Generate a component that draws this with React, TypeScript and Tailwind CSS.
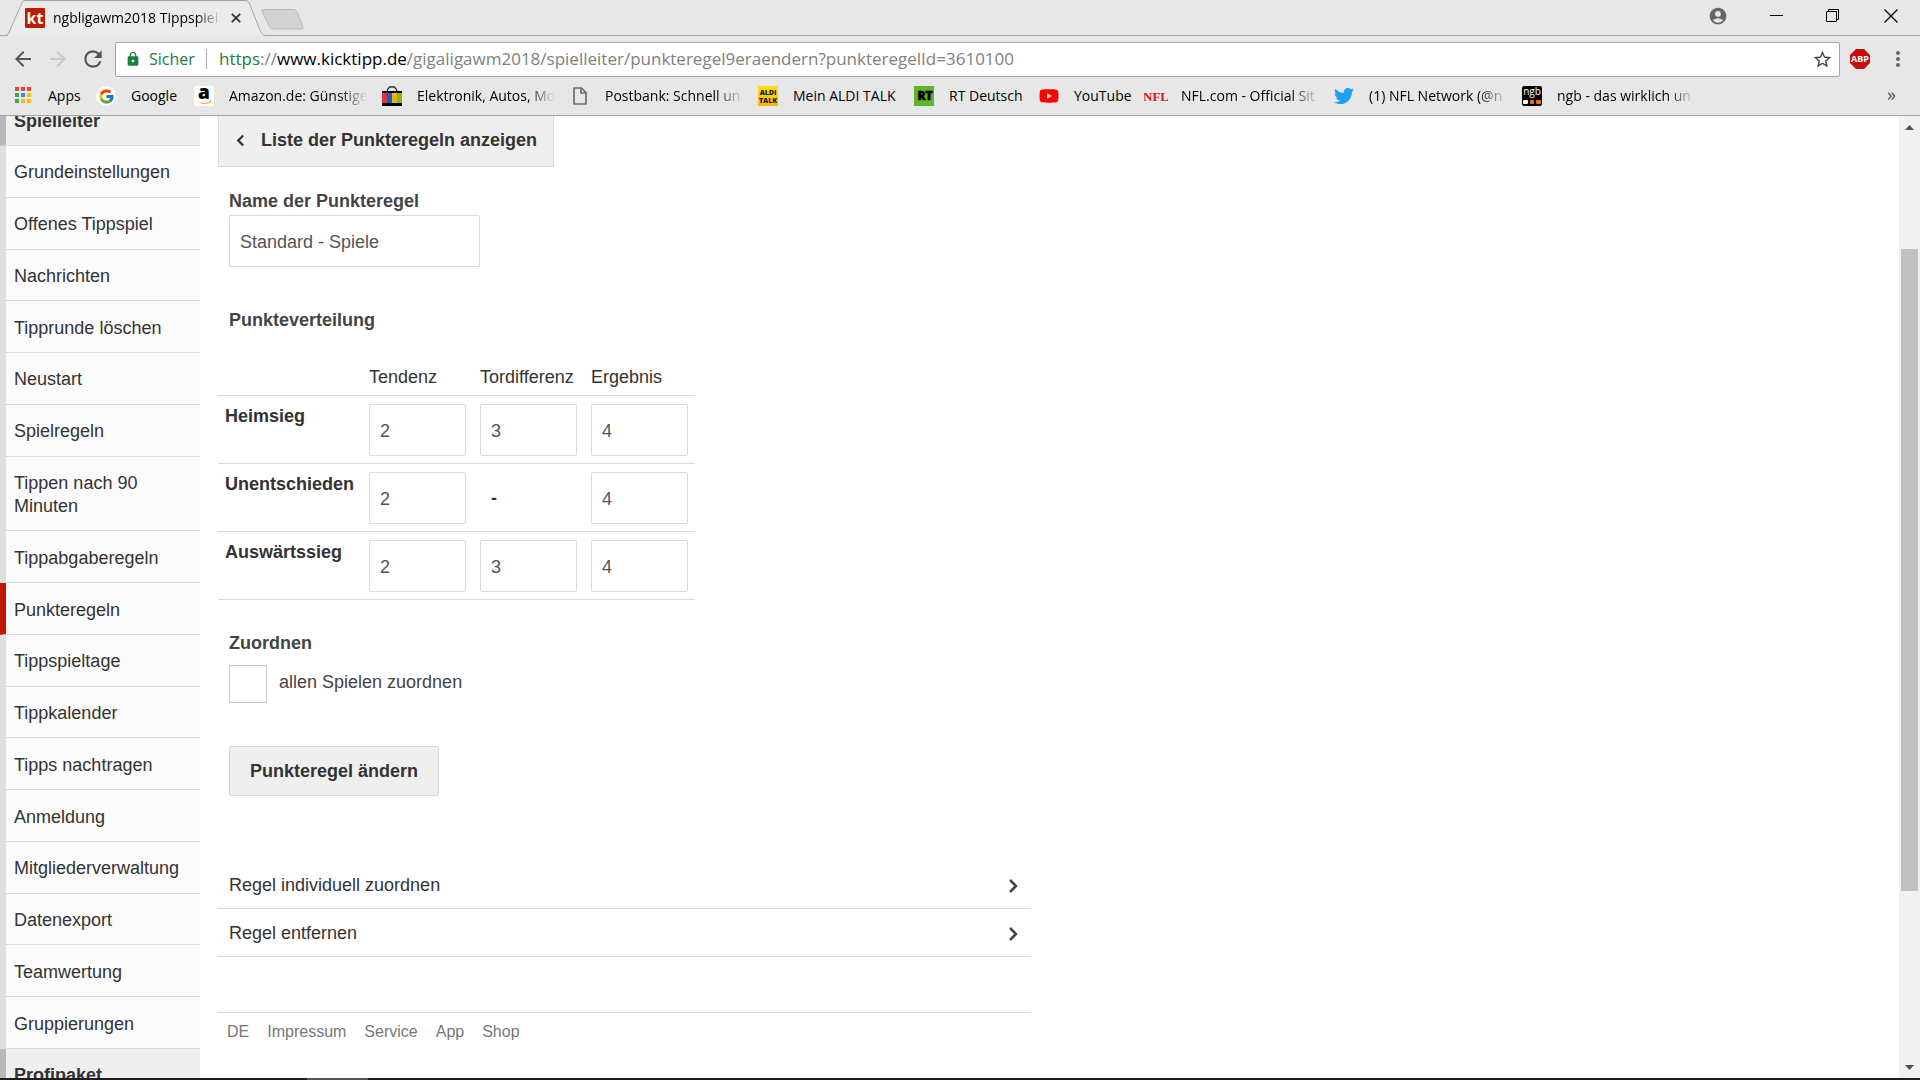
import { ReactNode } from 'react'
import { FaTwitter, FaYoutube } from 'react-icons/fa'
import { FcGoogle } from 'react-icons/fc'
import {
  MdAccountCircle,
  MdArrowBack,
  MdArrowForward,
  MdLock,
  MdMoreVert,
  MdRefresh,
  MdStarBorder,
} from 'react-icons/md'

const menuItems = [
  'Grundeinstellungen',
  'Offenes Tippspiel',
  'Nachrichten',
  'Tipprunde löschen',
  'Neustart',
  'Spielregeln',
  'Tippen nach 90 Minuten',
  'Tippabgaberegeln',
  'Punkteregeln',
  'Tippspieltage',
  'Tippkalender',
  'Tipps nachtragen',
  'Anmeldung',
  'Mitgliederverwaltung',
  'Datenexport',
  'Teamwertung',
  'Gruppierungen',
]

const columns = ['Tendenz', 'Tordifferenz', 'Ergebnis']

const rules = [
  { name: 'Heimsieg', points: ['2', '3', '4'] },
  { name: 'Unentschieden', points: ['2', null, '4'] },
  { name: 'Auswärtssieg', points: ['2', '3', '4'] },
]

function AppsIcon() {
  const colors = ['#f44336', '#f44336', '#f44336', '#34a853', '#4285f4', '#fbbc05', '#34a853', '#fbbc05', '#fbbc05']
  return (
    <svg className="w-5 h-5" viewBox="0 0 20 20">
      {colors.map((color, i) => (
        <rect key={i} x={2 + (i % 3) * 6} y={1 + Math.floor(i / 3) * 6} width="4" height="4" fill={color} />
      ))}
    </svg>
  )
}

function GoogleIcon() {
  return (
    <span className="flex w-5 h-5 items-center justify-center rounded-full bg-white">
      <FcGoogle size={17} />
    </span>
  )
}

function AmazonIcon() {
  return (
    <svg className="w-5 h-5" viewBox="0 0 20 20">
      <rect width="20" height="20" rx="3" fill="#fff" />
      <text x="10" y="13" textAnchor="middle" fontFamily="Open Sans" fontWeight="800" fontSize="19">a</text>
      <path d="M2.5 14.5c4.500 3.500 10 3.300 13.500 1l-.6-.7 2.300-.2-.6 2.300-.5-.6c-4.200 2.700-10.400 2-14.100-1.800z" fill="#f90" />
    </svg>
  )
}

function BagIcon() {
  return (
    <svg className="w-5 h-5" viewBox="0 0 20 20">
      <path d="M5.500 6V3.500L7.500 1h5l2 2.500V6" fill="none" stroke="#333" strokeWidth="1.300" />
      <rect y="5" width="20" height="2" fill="#000" />
      <rect y="7" width="5" height="10" fill="#e53238" />
      <rect x="5" y="7" width="5" height="10" fill="#0064d2" />
      <rect x="10" y="7" width="5" height="10" fill="#f5af02" />
      <rect x="15" y="7" width="5" height="10" fill="#86b817" />
      <rect y="17" width="20" height="3" fill="#000" />
    </svg>
  )
}

function PageIcon() {
  return (
    <svg className="w-5 h-5" viewBox="0 0 20 20" fill="none" stroke="#6e6e6e" strokeWidth="1.700">
      <path d="M4 2h7.500L16 6.500V18H4z" />
      <path d="M11 2v5h5" />
    </svg>
  )
}

function AldiIcon() {
  return (
    <svg className="w-5 h-5" viewBox="0 0 20 20" fontFamily="Open Sans" fontWeight="800" fontSize="7" textAnchor="middle" fill="#0b2140">
      <defs>
        <linearGradient id="aldi" x1="0" y1="0" x2="0" y2="1">
          <stop offset="0" stopColor="#ffe000" />
          <stop offset="1" stopColor="#ffb400" />
        </linearGradient>
      </defs>
      <rect width="20" height="20" fill="url(#aldi)" />
      <text x="10" y="9">ALDI</text>
      <text x="10" y="17">TALK</text>
    </svg>
  )
}

function RtIcon() {
  return (
    <svg className="w-5 h-5" viewBox="0 0 20 20">
      <rect width="20" height="20" fill="#5fb62a" />
      <text x="11" y="14" textAnchor="middle" fontFamily="Open Sans" fontWeight="800" fontSize="12" stroke="#000" strokeWidth=".6">RT</text>
    </svg>
  )
}

function NflIcon() {
  return (
    <svg className="w-6 h-5 shrink-0" viewBox="0 0 24 20">
      <text x="12" y="15" textAnchor="middle" fontFamily="Liberation Serif" fontWeight="700" fontSize="13" fontStyle="normal" fill="#d5171e">NFL</text>
    </svg>
  )
}

function NgbIcon() {
  return (
    <svg className="w-5 h-5" viewBox="0 0 20 20">
      <rect width="20" height="20" rx="2" fill="#000" />
      <text x="10" y="9" textAnchor="middle" fontFamily="Open Sans" fontSize="10" fill="#fff">ngb</text>
      <rect x="1" y="14" width="5" height="4" rx="1" fill="#fff" />
      <rect x="8" y="14" width="4" height="4" rx="1" fill="#f26a1b" />
      <rect x="14" y="14" width="5" height="4" rx="1" fill="#f26a1b" />
    </svg>
  )
}

const bookmarks: { label: string; icon: ReactNode; width: string; fade?: boolean }[] = [
  { label: 'Apps', icon: <AppsIcon />, width: 'w-[33px]' },
  { label: 'Google', icon: <GoogleIcon />, width: 'w-12' },
  { label: 'Amazon.de: Günstige', icon: <AmazonIcon />, width: 'w-[138px]', fade: true },
  { label: 'Elektronik, Autos, Mo', icon: <BagIcon />, width: 'w-[138px]', fade: true },
  { label: 'Postbank: Schnell un', icon: <PageIcon />, width: 'w-[138px]', fade: true },
  { label: 'Mein ALDI TALK', icon: <AldiIcon />, width: 'w-[106px]' },
  { label: 'RT Deutsch', icon: <RtIcon />, width: 'w-[75px]' },
  { label: 'YouTube', icon: <FaYoutube size={20} color="#f00" />, width: 'w-[57px]' },
  { label: 'NFL.com - Official Sit', icon: <NflIcon />, width: 'w-[138px]', fade: true },
  { label: '(1) NFL Network (@n', icon: <FaTwitter size={20} color="#1da1f2" />, width: 'w-[138px]', fade: true },
  { label: 'ngb - das wirklich un', icon: <NgbIcon />, width: 'w-[138px]', fade: true },
]

function TabStrip() {
  return (
    <div className="flex h-9 border-b border-[#a5a5a5]">
      <div className="relative flex h-9 w-[260px] items-center pl-[25px]">
        <svg className="absolute left-0 top-0 w-[271px] h-9" viewBox="0 0 271 36">
          <path d="M7 36C10 34 10 31 12 27L21 5C22 2 23 .5 26 .5H245C248 .5 249 2 250 5L260 30C262 34 262 35 265 36z" fill="#ebebeb" />
          <path d="M0 35.500H5C8 35.500 9 33 10 30L21 5C22 2 23 .5 26 .5H245C248 .5 249 2 250 5L260 30C262 34 263 35.500 266 35.500H271" fill="none" stroke="#a5a5a5" />
        </svg>
        <svg className="relative w-5 h-5 shrink-0" viewBox="0 0 20 20">
          <rect width="20" height="20" rx="1" fill="#c01a00" />
          <text x="10" y="16" textAnchor="middle" fontFamily="Open Sans" fontWeight="700" fontSize="16" fill="#fff">kt</text>
        </svg>
        <span className="relative ml-2 w-[168px] overflow-hidden whitespace-nowrap text-sm mask-r-from-85%">
          ngbligawm2018 Tippspiel
        </span>
        <button className="relative ml-2.5" aria-label="Tab schließen">
          <svg className="w-[10px] h-[10px]" viewBox="0 0 10 10" stroke="#333" strokeWidth="1.800">
            <path d="M.8.8l8.400 8.400M9.200.8L.8 9.200" />
          </svg>
        </button>
      </div>
      <button className="ml-px mt-2 h-[22px]" aria-label="Neuer Tab">
        <svg className="w-11 h-[22px]" viewBox="0 0 44 22">
          <path d="M3 1.500H32C34 1.500 35 2.500 36 4L42 19C42 21 42 21 40 21H12C10 21 9 20 8 18L1 3C1 2 1 1.500 3 1.500z" fill="#d2d2d2" stroke="#b8b8b8" />
        </svg>
      </button>
      <div className="ml-auto flex h-8 items-center pr-[22px]">
        <button aria-label="Profil"><MdAccountCircle size={20} color="#666" /></button>
        <button className="ml-[42px]" aria-label="Minimieren">
          <svg className="w-3.5 h-3.5" viewBox="0 0 14 14" stroke="#000"><path d="M0 6.500h13" /></svg>
        </button>
        <button className="ml-[42px]" aria-label="Verkleinern">
          <svg className="w-3.5 h-3.5" viewBox="0 0 14 14" fill="none" stroke="#000">
            <path d="M.5 2.500h10v10H.5zM2.500 2.500v-2h10v10h-2" />
          </svg>
        </button>
        <button className="ml-11" aria-label="Schließen">
          <svg className="w-3.5 h-3.5" viewBox="0 0 14 14" stroke="#000" strokeWidth="1.200"><path d="M.5.5l13 13M13.500.5l-13 13" /></svg>
        </button>
      </div>
    </div>
  )
}

function Toolbar() {
  return (
    <div className="flex h-11 items-center pl-[11px] pr-[10px] pt-0.5">
      <button aria-label="Zurück"><MdArrowBack size={24} color="#555" /></button>
      <button className="ml-[11px]" aria-label="Vorwärts"><MdArrowForward size={24} color="#c8c8c8" /></button>
      <button className="ml-2.5" aria-label="Neu laden"><MdRefresh size={26} color="#555" /></button>
      <div className="ml-[9px] flex h-[35px] flex-1 items-center rounded-xs border border-[#a5a5a5] bg-white pl-[9px] pr-1.5 text-[17px]">
        <MdLock size={16} color="#188038" />
        <span className="ml-2 w-[50px] text-base text-[#188038]">Sicher</span>
        <span className="ml-[7px] h-5 w-px bg-[#aaa]" />
        <div
          className="ml-3 flex-1 whitespace-nowrap text-[#808080] outline-none"
          role="textbox"
          aria-label="Adresse"
          contentEditable
          suppressContentEditableWarning
        >
          <span className="text-[#188038]">https</span>://<span className="text-black">www.kicktipp.de</span>
          /gigaligawm2018/spielleiter/punkteregel9eraendern?punkteregelId=3610100
        </div>
        <button aria-label="Lesezeichen"><MdStarBorder size={21} color="#444" /></button>
      </div>
      <button className="ml-2.5" aria-label="ABP">
        <svg className="w-5 h-5" viewBox="0 0 20 20">
          <path d="M6 0h8l6 6v8l-6 6H6l-6-6V6z" fill="#c70d0d" />
          <text x="10" y="13" textAnchor="middle" fontFamily="Open Sans" fontWeight="700" fontSize="9" fill="#fff">ABP</text>
        </svg>
      </button>
      <button className="ml-4" aria-label="Menü"><MdMoreVert size={24} color="#666" /></button>
    </div>
  )
}

function BookmarkBar() {
  return (
    <nav className="flex h-[35px] items-center gap-[15px] pb-[3px] pl-[13px] pr-6 text-sm">
      {bookmarks.map((b) => (
        <a key={b.label} href="#" className="flex shrink-0 items-center gap-[15px]">
          <span className="flex w-5 justify-center">{b.icon}</span>
          <span className={`${b.width} whitespace-nowrap ${b.fade ? 'overflow-hidden mask-r-from-80%' : ''}`}>{b.label}</span>
        </a>
      ))}
      <button className="ml-auto pb-1 text-lg text-[#555]" aria-label="Weitere Lesezeichen">»</button>
    </nav>
  )
}

function Sidebar() {
  return (
    <aside className="flex w-[200px] shrink-0 flex-col overflow-hidden leading-[23px] text-[#333]">
      <div className="flex h-[30px] shrink-0 items-end overflow-hidden border-b border-l-6 border-b-[#d9d9d9] border-l-[#b8b8b8] bg-[#efefef] pb-3 pl-2 font-bold">
        Spielleiter
      </div>
      <ul className="flex flex-1 flex-col">
        {menuItems.map((item) => (
          <li
            key={item}
            className={`flex flex-auto items-center border-b border-l-6 border-b-[#d9d9d9] bg-[#fbfbfb] pl-2 pr-4 pt-[3px] ${
              item === 'Punkteregeln' ? 'border-l-[#c01a00]' : 'border-l-[#dfdfdf]'
            }`}
          >
            <a href="#">{item}</a>
          </li>
        ))}
      </ul>
      <div className="h-[29px] shrink-0 overflow-hidden border-l-6 border-[#b8b8b8] bg-[#efefef] pl-2 pt-[15px] font-bold">
        Profipaket
      </div>
    </aside>
  )
}

function PointsTable() {
  return (
    <table className="mt-[34px] border-collapse text-left">
      <thead>
        <tr className="border-b border-[#d9d9d9]">
          <td className="w-36" />
          {columns.map((column) => (
            <th key={column} className="w-[111px] pb-1.5 pl-[7px] font-normal">{column}</th>
          ))}
        </tr>
      </thead>
      <tbody>
        {rules.map((rule) => (
          <tr key={rule.name} className="border-b border-[#d9d9d9]">
            <th className="pl-[7px] pt-[9px] align-top">{rule.name}</th>
            {rule.points.map((value, i) => (
              <td key={columns[i]} className="px-[7px] pb-[7px] pt-2">
                {value ? (
                  <input
                    className="block h-[52px] w-[97px] rounded-xs border border-[#d9d9d9] px-2.5 pt-0.5 text-[#555]"
                    aria-label={`${rule.name} ${columns[i]}`}
                    defaultValue={value}
                  />
                ) : (
                  <span className="block pl-[11px] font-bold leading-[52px]">-</span>
                )}
              </td>
            ))}
          </tr>
        ))}
      </tbody>
    </table>
  )
}

function Chevron({ className, d }: { className: string; d: string }) {
  return (
    <svg className={className} viewBox="0 0 10 14" fill="none" stroke="currentColor" strokeWidth="2.500">
      <path d={d} />
    </svg>
  )
}

function RuleForm() {
  return (
    <main className="ml-[18px] w-full max-w-[813px] leading-[23px] text-[#333]">
      <a href="#" className="inline-flex items-center border border-t-0 border-[#d9d9d9] bg-[#efefef] pb-[14px] pl-[17px] pr-4 pt-[13px] font-bold">
        <Chevron className="mr-4 w-[9px] h-[13px]" d="M8 1.500L2.500 7 8 12.500" />
        Liste der Punkteregeln anzeigen
      </a>

      <form>
        <div className="ml-[11px] mt-[23px] flex flex-col items-start">
          <label htmlFor="name" className="font-bold text-[#444]">Name der Punkteregel</label>
          <input
            id="name"
            className="mt-0.5 h-[52px] w-[251px] rounded-xs border border-[#d9d9d9] px-2.5 pt-0.5 text-[#555]"
            defaultValue="Standard - Spiele"
          />
          <h2 className="mt-[42px] font-bold text-[#444]">Punkteverteilung</h2>
        </div>

        <PointsTable />

        <div className="ml-[11px] mt-8 flex flex-col items-start">
          <h2 className="font-bold text-[#444]">Zuordnen</h2>
          <div className="mt-2.5 flex items-center">
            <input id="all" type="checkbox" className="h-[38px] w-[38px] appearance-none border border-[#c8c8c8] bg-white" />
            <label htmlFor="all" className="pb-1 pl-3 text-[#444]">allen Spielen zuordnen</label>
          </div>
          <button type="button" className="mt-[43px] h-[50px] rounded-xs border border-[#d9d9d9] bg-[#efefef] px-5 font-bold">
            Punkteregel ändern
          </button>
        </div>
      </form>

      <div className="mt-[65px]">
        {['Regel individuell zuordnen', 'Regel entfernen'].map((label) => (
          <a key={label} href="#" className="flex h-12 items-center justify-between border-b border-[#d9d9d9] pl-[11px] pr-[13px] pt-0.5">
            {label}
            <Chevron className="w-[10px] h-[14px] text-[#444]" d="M2 1l6 6-6 6" />
          </a>
        ))}
      </div>

      <footer className="mt-[55px] flex gap-[18px] border-t border-[#d9d9d9] pl-[9px] pt-[7px] text-base leading-[23px] text-[#777]">
        {['DE', 'Impressum', 'Service', 'App', 'Shop'].map((label) => (
          <a key={label} href="#">{label}</a>
        ))}
      </footer>
    </main>
  )
}

function Scrollbar() {
  return (
    <div className="ml-auto flex w-[21px] shrink-0 flex-col items-center bg-[#f1f1f1]">
      <svg className="h-[22px] w-[9px]" viewBox="0 0 9 22"><path d="M0 14l4.500-5L9 14z" fill="#505050" /></svg>
      <div className="mt-[111px] w-[17px] flex-1 bg-[#c1c1c1]" />
      <svg className="mt-[165px] h-[22px] w-[9px]" viewBox="0 0 9 22"><path d="M0 9l4.500 5L9 9z" fill="#505050" /></svg>
    </div>
  )
}

export default function App() {
  return (
    <div className="flex h-screen flex-col overflow-hidden bg-white">
      <header className="shrink-0 border-b border-[#a5a5a5] bg-[#e7e7e7] font-['Open_Sans',sans-serif] text-black">
        <TabStrip />
        <Toolbar />
        <BookmarkBar />
      </header>
      <div className="flex min-h-0 flex-1 overflow-hidden font-['Liberation_Sans',sans-serif] text-lg">
        <Sidebar />
        <RuleForm />
        <Scrollbar />
      </div>
      {/* Taskbar edge */}
      <div className="h-0.5 shrink-0 bg-[#1f1c1e] pl-[307px]">
        <div className="h-full w-[61px] bg-[#555]" />
      </div>
    </div>
  )
}
